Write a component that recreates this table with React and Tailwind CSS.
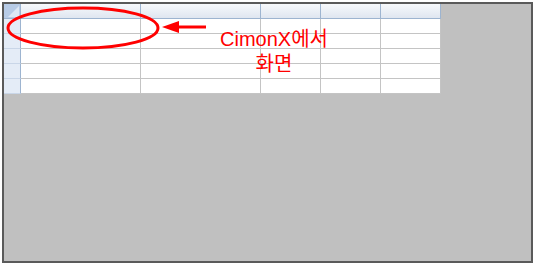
const cols = [120, 120, 60, 60, 60]
const rows = [0, 1, 2, 3, 4]

function HeaderRow() {
  return (
    <div className="flex h-[15px] border-b border-[#9db4d0] bg-gradient-to-b from-[#f7f9fc] to-[#dfe6f0]">
      <div className="relative w-[17px] shrink-0 border-r border-[#9db4d0] bg-[#b7cbe6]">
        <svg className="absolute right-[1px] bottom-[1px]" width="11" height="11" viewBox="0 0 11 11">
          <polygon points="11,0 11,11 0,11" fill="#dde7f4" />
        </svg>
      </div>
      {cols.map((w, i) => (
        <div key={i} className="shrink-0 border-r border-[#9db4d0]" style={{ width: w }} />
      ))}
    </div>
  )
}

function BodyRow() {
  return (
    <div className="flex h-[15px] border-b border-[#c4c4c4] bg-white">
      <div className="w-[17px] shrink-0 border-r border-[#9db4d0] bg-[#e4ecf7] -mb-px border-b border-b-[#c9d6e8]" />
      {cols.map((w, i) => (
        <div key={i} className="shrink-0 border-r border-[#c4c4c4]" style={{ width: w }} />
      ))}
    </div>
  )
}

export default function App() {
  return (
    <div className="relative w-[536px] h-[265px] bg-white pt-[2px] pl-[2px]">
      <div className="w-[531px] h-[261px] border-2 border-[#5a5a5a] bg-[#c0c0c0]">
        <div className="w-[437px]">
          <HeaderRow />
          {rows.map(r => (
            <BodyRow key={r} />
          ))}
        </div>
      </div>

      {/* red markup: ring around the first cell, pointer arrow and caption */}
      <svg className="absolute left-0 top-0" width="536" height="265" viewBox="0 0 536 265">
        <ellipse cx="83" cy="28" rx="75" ry="20" fill="none" stroke="#ff0000" strokeWidth="3" />
        <line x1="176" y1="27" x2="206" y2="27" stroke="#ff0000" strokeWidth="3" />
        <polygon points="162,27 179,21 179,33" fill="#ff0000" />
      </svg>
      <div className="absolute left-[199px] top-[27px] w-[150px] text-center text-[20px] leading-[25px] text-[#ff0000] font-['Liberation_Sans','Noto_Sans_CJK_KR',sans-serif]">
        <div>CimonX에서</div>
        <div>화면</div>
      </div>
    </div>
  )
}
